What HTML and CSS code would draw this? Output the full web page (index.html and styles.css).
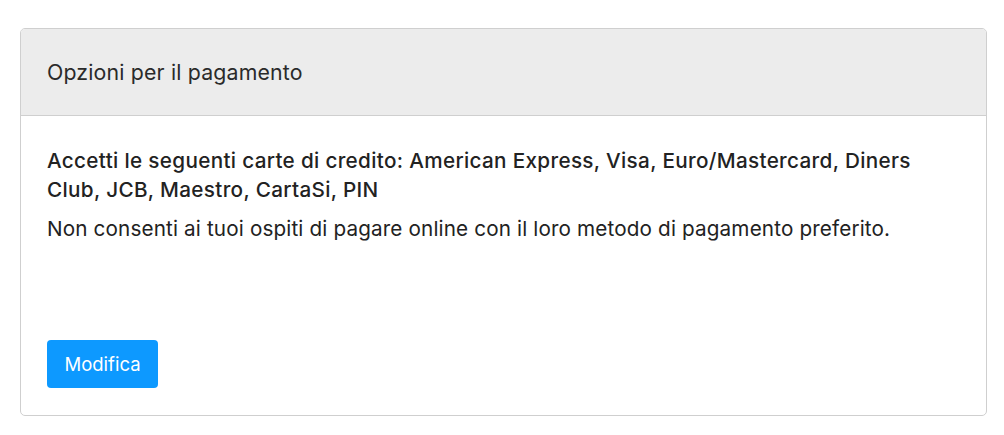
FILE: index.html
```html
<!DOCTYPE html>
<html lang="it">
<head>
<meta charset="utf-8">
<link rel="stylesheet" href="styles.css">
</head>
<body>
<div class="card">
  <div class="card-header">Opzioni per il pagamento</div>
  <div class="card-body">
    <p class="cards">Accetti le seguenti carte di credito: American Express, Visa, Euro/Mastercard, Diners Club, JCB, Maestro, CartaSi, PIN</p>
    <p class="note">Non consenti ai tuoi ospiti di pagare online con il loro metodo di pagamento preferito.</p>
    <button class="btn">Modifica</button>
  </div>
</div>
</body>
</html>
```
FILE: styles.css
```css
html, body {
  margin: 0;
  padding: 0;
  background: #fff;
}
body {
  padding: 28px 17px 0 20px;
  font-family: Inter, "Noto Sans", sans-serif;
  color: #222;
}
.card {
  border: 1px solid #cfcfcf;
  border-radius: 5px;
  overflow: hidden;
  height: 388px;
  box-sizing: border-box;
  display: flex;
  flex-direction: column;
}
.card-header {
  background: #ececec;
  border-bottom: 1px solid #cfcfcf;
  padding: 30px 26px 30px 26px;
  font-size: 21.3px;
  line-height: 26px;
  letter-spacing: 0.17px;
  color: #2a2a2a;
}
.card-body {
  padding: 30px 26px 27px 26px;
  flex: 1;
  display: flex;
  flex-direction: column;
  align-items: flex-start;
}
.card-body p {
  margin: 0;
  font-size: 20.7px;
  line-height: 29px;
}
.cards {
  font-weight: 500;
  letter-spacing: 0.33px;
  color: #222;
}
.note {
  margin-top: 10px !important;
  letter-spacing: 0.14px;
  color: #222;
}
.btn {
  margin-top: auto;
  background: #0d99ff;
  color: #fff;
  border: none;
  border-radius: 4px;
  font-family: inherit;
  font-size: 18.5px;
  height: 48px;
  width: 111px;
  padding: 0;
}
```
